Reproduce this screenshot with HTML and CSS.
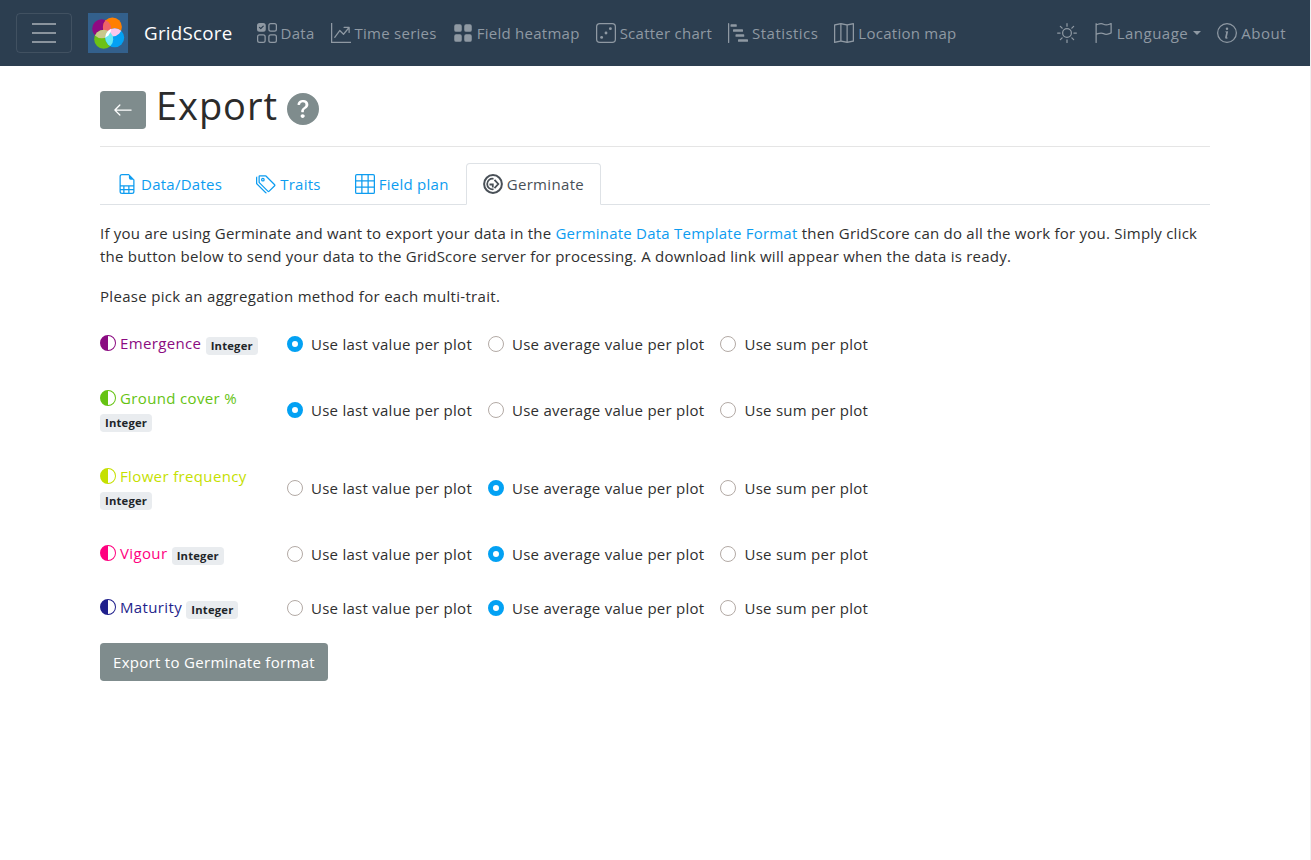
FILE: index.html
```html
<!DOCTYPE html>
<html lang="en">
<head>
<meta charset="utf-8">
<title>GridScore</title>
<link rel="stylesheet" href="styles.css">
</head>
<body>
<nav class="navbar">
  <button class="toggler" aria-label="Menu"><span></span><span></span><span></span></button>
  <div class="logo">
    <svg viewBox="0 0 40 40" width="40" height="40">
      <defs>
        <clipPath id="cp"><circle cx="13.700" cy="15.700" r="9.500"/></clipPath>
        <clipPath id="co"><circle cx="24.400" cy="14" r="9.500"/></clipPath>
        <clipPath id="cg"><circle cx="15.700" cy="26.300" r="9.500"/></clipPath>
        <clipPath id="cb"><circle cx="26.700" cy="24.700" r="9.500"/></clipPath>
      </defs>
      <rect width="40" height="40" fill="#33608c"/>
      <circle cx="13.700" cy="15.700" r="9.500" fill="#8f0a83"/>
      <circle cx="24.400" cy="14" r="9.500" fill="#ff7f00"/>
      <circle cx="15.700" cy="26.300" r="9.500" fill="#6cc114"/>
      <circle cx="26.700" cy="24.700" r="9.500" fill="#03a1f3"/>
      <circle cx="24.400" cy="14" r="9.500" fill="#f0626a" clip-path="url(#cp)"/>
      <circle cx="15.700" cy="26.300" r="9.500" fill="#c8c88c" clip-path="url(#cp)"/>
      <circle cx="26.700" cy="24.700" r="9.500" fill="#f9c8ec" clip-path="url(#co)"/>
      <circle cx="26.700" cy="24.700" r="9.500" fill="#66e8f2" clip-path="url(#cg)"/>
      <circle cx="26.700" cy="24.700" r="9.500" fill="#fff" clip-path="url(#cp)"/>
    </svg>
  </div>
  <a class="brand">GridScore</a>
  <ul class="nav-main">
    <li><svg class="ni" viewBox="0 0 16 16"><path fill-rule="evenodd" d="M2 10h3a1 1 0 0 1 1 1v3a1 1 0 0 1-1 1H2a1 1 0 0 1-1-1v-3a1 1 0 0 1 1-1zm9-9h3a1 1 0 0 1 1 1v3a1 1 0 0 1-1 1h-3a1 1 0 0 1-1-1V2a1 1 0 0 1 1-1zm0 9a1 1 0 0 0-1 1v3a1 1 0 0 0 1 1h3a1 1 0 0 0 1-1v-3a1 1 0 0 0-1-1h-3zm0-10a2 2 0 0 0-2 2v3a2 2 0 0 0 2 2h3a2 2 0 0 0 2-2V2a2 2 0 0 0-2-2h-3zM2 9a2 2 0 0 0-2 2v3a2 2 0 0 0 2 2h3a2 2 0 0 0 2-2v-3a2 2 0 0 0-2-2H2zm7 2a2 2 0 0 1 2-2h3a2 2 0 0 1 2 2v3a2 2 0 0 1-2 2h-3a2 2 0 0 1-2-2v-3zM0 2a2 2 0 0 1 2-2h3a2 2 0 0 1 2 2v3a2 2 0 0 1-2 2H2a2 2 0 0 1-2-2V2zm5.354.854a.5.5 0 1 0-.708-.708L3 3.793l-.646-.647a.5.5 0 1 0-.708.708l1 1a.5.5 0 0 0 .708 0l2-2z"/></svg>Data</li>
    <li><svg class="ni" viewBox="0 0 16 16"><path fill-rule="evenodd" d="M0 0h1v15h15v1H0V0zm10 3.500a.5.5 0 0 1 .5-.5h4a.5.5 0 0 1 .5.5v4a.5.5 0 0 1-1 0V4.900l-3.613 4.417a.5.5 0 0 1-.74.037L7.060 6.767l-3.656 5.027a.5.5 0 0 1-.808-.588l4-5.500a.5.5 0 0 1 .758-.06l2.609 2.610L13.445 4H10.500a.5.5 0 0 1-.5-.5z"/></svg>Time series</li>
    <li><svg class="ni" viewBox="0 0 16 16"><path d="M1 2.500A1.500 1.500 0 0 1 2.500 1h3A1.500 1.500 0 0 1 7 2.500v3A1.500 1.500 0 0 1 5.500 7h-3A1.500 1.500 0 0 1 1 5.500v-3zm8 0A1.500 1.500 0 0 1 10.500 1h3A1.500 1.500 0 0 1 15 2.500v3A1.500 1.500 0 0 1 13.500 7h-3A1.500 1.500 0 0 1 9 5.500v-3zm-8 8A1.500 1.500 0 0 1 2.500 9h3A1.500 1.500 0 0 1 7 10.500v3A1.500 1.500 0 0 1 5.500 15h-3A1.500 1.500 0 0 1 1 13.500v-3zm8 0A1.500 1.500 0 0 1 10.500 9h3a1.500 1.500 0 0 1 1.500 1.500v3a1.500 1.500 0 0 1-1.500 1.500h-3A1.500 1.500 0 0 1 9 13.500v-3z"/></svg>Field heatmap</li>
    <li><svg class="ni" viewBox="0 0 16 16"><path d="M13 1a2 2 0 0 1 2 2v10a2 2 0 0 1-2 2H3a2 2 0 0 1-2-2V3a2 2 0 0 1 2-2h10zM3 0a3 3 0 0 0-3 3v10a3 3 0 0 0 3 3h10a3 3 0 0 0 3-3V3a3 3 0 0 0-3-3H3z"/><circle cx="4.500" cy="11.500" r="1.150"/><circle cx="8" cy="8" r="1.150"/><circle cx="11.500" cy="4.500" r="1.150"/></svg>Scatter chart</li>
    <li class="wide"><svg class="ni" viewBox="0 0 16 16"><path d="M.5 0a.5.5 0 0 1 .5.5v15a.5.5 0 0 1-1 0V.5A.5.5 0 0 1 .5 0zM2 1.500a.5.5 0 0 1 .5-.5h4a.5.5 0 0 1 .5.5v1a.5.5 0 0 1-.5.5h-4a.5.5 0 0 1-.5-.5v-1zm2 4a.5.5 0 0 1 .5-.5h7a.5.5 0 0 1 .5.5v1a.5.5 0 0 1-.5.5h-7a.5.5 0 0 1-.5-.5v-1zm2 4a.5.5 0 0 1 .5-.5h6a.5.5 0 0 1 .5.5v1a.5.5 0 0 1-.5.5h-6a.5.5 0 0 1-.5-.5v-1zm2 4a.5.5 0 0 1 .5-.5h7a.5.5 0 0 1 .5.5v1a.5.5 0 0 1-.5.5h-7a.5.5 0 0 1-.5-.5v-1z"/></svg>Statistics</li>
    <li><svg class="ni" viewBox="0 0 16 16"><path fill-rule="evenodd" d="M15.817.113A.5.5 0 0 1 16 .5v14a.5.5 0 0 1-.402.49l-5 1a.502.502 0 0 1-.196 0L5.500 15.010l-4.902.98A.5.5 0 0 1 0 15.500v-14a.5.5 0 0 1 .402-.49l5-1a.5.5 0 0 1 .196 0L10.500.99l4.902-.98a.5.5 0 0 1 .415.103zM10 1.910l-4-.8v12.980l4 .8V1.910zm1 12.980 4-.8V1.110l-4 .8v12.980zm-6-.8V1.110l-4 .8v12.980l4-.8z"/></svg>Location map</li>
  </ul>
  <ul class="nav-right">
    <li><svg class="ni" viewBox="0 0 16 16"><path d="M8 11a3 3 0 1 1 0-6 3 3 0 0 1 0 6zm0 1a4 4 0 1 0 0-8 4 4 0 0 0 0 8zM8 0a.5.5 0 0 1 .5.5v2a.5.5 0 0 1-1 0v-2A.5.5 0 0 1 8 0zm0 13a.5.5 0 0 1 .5.5v2a.5.5 0 0 1-1 0v-2A.5.5 0 0 1 8 13zm8-5a.5.5 0 0 1-.5.5h-2a.5.5 0 0 1 0-1h2a.5.5 0 0 1 .5.5zM3 8a.5.5 0 0 1-.5.5h-2a.5.5 0 0 1 0-1h2A.5.5 0 0 1 3 8zm10.657-5.657a.5.5 0 0 1 0 .707l-1.414 1.415a.5.5 0 1 1-.707-.708l1.414-1.414a.5.5 0 0 1 .707 0zm-9.193 9.193a.5.5 0 0 1 0 .707L3.050 13.657a.5.5 0 0 1-.707-.707l1.414-1.414a.5.5 0 0 1 .707 0zm9.193 2.121a.5.5 0 0 1-.707 0l-1.414-1.414a.5.5 0 0 1 .707-.707l1.414 1.414a.5.5 0 0 1 0 .707zM4.464 4.465a.5.5 0 0 1-.707 0L2.343 3.050a.5.5 0 1 1 .707-.707l1.414 1.414a.5.5 0 0 1 0 .708z"/></svg></li>
    <li><svg class="ni" viewBox="0 0 16 16"><path fill-rule="evenodd" d="M14.778.085A.5.5 0 0 1 15 .5V8a.5.5 0 0 1-.314.464L14.500 8l.186.464-.003.001-.006.003-.023.009a12.435 12.435 0 0 1-.397.15c-.264.095-.631.223-1.047.35-.816.252-1.879.523-2.710.523-.847 0-1.548-.28-2.158-.525l-.028-.01C7.680 8.710 7.140 8.500 6.500 8.500c-.7 0-1.638.23-2.437.477A19.626 19.626 0 0 0 3 9.342V15.500a.5.5 0 0 1-1 0V.5a.5.5 0 0 1 1 0v.282c.226-.079.496-.17.79-.26C4.606.272 5.670 0 6.500 0c.84 0 1.524.277 2.121.519l.043.018C9.286.788 9.828 1 10.500 1c.7 0 1.638-.23 2.437-.477a19.587 19.587 0 0 0 1.349-.476l.019-.007.004-.002h.001M14 1.221c-.22.078-.480.167-.766.255-.81.252-1.872.523-2.734.523-.886 0-1.592-.286-2.203-.534l-.008-.002C7.662 1.210 7.139 1 6.500 1c-.669 0-1.606.229-2.415.478A21.294 21.294 0 0 0 3 1.845v6.433c.22-.078.480-.167.766-.255C4.576 7.770 5.638 7.500 6.500 7.500c.847 0 1.548.28 2.158.525l.028.01C9.320 8.290 9.860 8.500 10.500 8.500c.668 0 1.606-.229 2.415-.478A21.317 21.317 0 0 0 14 7.655V1.222z"/></svg>Language<span class="caret"></span></li>
    <li><svg class="ni" viewBox="0 0 16 16"><path d="M8 15A7 7 0 1 1 8 1a7 7 0 0 1 0 14zm0 1A8 8 0 1 0 8 0a8 8 0 0 0 0 16z"/><path d="m8.930 6.588-2.290.287-.082.38.45.083c.294.07.352.176.288.469l-.738 3.468c-.194.897.105 1.319.808 1.319.545 0 1.178-.252 1.465-.598l.088-.42c-.2.176-.492.246-.686.246-.275 0-.375-.193-.304-.533L8.930 6.588zM9 4.500a1 1 0 1 1-2 0 1 1 0 0 1 2 0z"/></svg>About</li>
  </ul>
</nav>

<main class="container">
  <header class="page-head">
    <button class="btn back" aria-label="Back"><svg viewBox="0 0 16 16" width="20" height="20"><path fill-rule="evenodd" d="M15 8a.5.5 0 0 0-.5-.5H2.707l3.147-3.146a.5.5 0 1 0-.708-.708l-4 4a.5.5 0 0 0 0 .708l4 4a.5.5 0 0 0 .708-.708L2.707 8.500H14.500A.5.5 0 0 0 15 8z"/></svg></button>
    <h1>Export</h1>
    <svg class="help" viewBox="0 0 16 16"><path d="M16 8A8 8 0 1 1 0 8a8 8 0 0 1 16 0zM5.496 6.033h.825c.138 0 .248-.113.266-.25.09-.656.54-1.134 1.342-1.134.686 0 1.314.343 1.314 1.168 0 .635-.374.927-.965 1.371-.673.489-1.206 1.060-1.168 1.987l.003.217a.25.25 0 0 0 .25.246h.811a.25.25 0 0 0 .25-.25v-.105c0-.718.273-.927 1.010-1.486.609-.463 1.244-.977 1.244-2.056 0-1.511-1.276-2.241-2.673-2.241-1.267 0-2.655.59-2.750 2.286a.237.237 0 0 0 .241.247zm2.325 6.443c.61 0 1.029-.394 1.029-.927 0-.552-.42-.94-1.029-.94-.584 0-1.009.388-1.009.94 0 .533.425.927 1.010.927z"/></svg>
  </header>
  <ul class="tabs">
    <li class="tab"><svg class="ti" viewBox="0 0 16 16"><path fill-rule="evenodd" d="M14 14V4.500L9.500 0H4a2 2 0 0 0-2 2v12a2 2 0 0 0 2 2h8a2 2 0 0 0 2-2zM9.500 3A1.500 1.500 0 0 0 11 4.500h2V9H3V2a1 1 0 0 1 1-1h5.500v2zM3 12v-2h2v2H3zm0 1h2v2H4a1 1 0 0 1-1-1v-1zm3 2v-2h3v2H6zm4 0v-2h3v1a1 1 0 0 1-1 1h-2zm3-3h-3v-2h3v2zm-7 0v-2h3v2H6z"/></svg>Data/Dates</li>
    <li class="tab"><svg class="ti" viewBox="0 0 16 16"><path d="M3 2v4.586l7 7L14.586 9l-7-7H3zM2 2a1 1 0 0 1 1-1h4.586a1 1 0 0 1 .707.293l7 7a1 1 0 0 1 0 1.414l-4.586 4.586a1 1 0 0 1-1.414 0l-7-7A1 1 0 0 1 2 6.586V2z"/><path d="M5.500 5a.5.5 0 1 1 0-1 .5.5 0 0 1 0 1zm0 1a1.500 1.500 0 1 0 0-3 1.500 1.500 0 0 0 0 3zM1 7.086a1 1 0 0 0 .293.707L8.750 15.250l-.043.043a1 1 0 0 1-1.414 0l-7-7A1 1 0 0 1 0 7.586V3a1 1 0 0 1 1-1v5.086z"/></svg>Traits</li>
    <li class="tab"><svg class="ti" viewBox="0 0 16 16"><path fill-rule="evenodd" d="M0 1.500A1.500 1.500 0 0 1 1.500 0h13A1.500 1.500 0 0 1 16 1.500v13a1.500 1.500 0 0 1-1.500 1.500h-13A1.500 1.500 0 0 1 0 14.500v-13zM1.500 1a.5.5 0 0 0-.5.5V5h4V1H1.500zM5 6H1v4h4V6zm1 4h4V6H6v4zm-1 1H1v3.500a.5.5 0 0 0 .5.5H5v-4zm1 0v4h4v-4H6zm5 0v4h3.500a.5.5 0 0 0 .5-.5V11h-4zm0-1h4V6h-4v4zm0-5h4V1.500a.5.5 0 0 0-.5-.5H11v4zm-1 0V1H6v4h4z"/></svg>Field plan</li>
    <li class="tab active"><svg class="ti ti-line" viewBox="0 0 20 20"><circle cx="10" cy="10" r="8.900" stroke-width="2"/><path d="M10.500 4.800A5.300 5.300 0 1 0 10.500 15.200M6.500 10.500h3.300v3" stroke-width="1.800"/><path d="M11.500 5.800l3.800 4.200-3.800 4.200" stroke-width="1.800"/></svg>Germinate</li>
  </ul>
  <p class="intro">If you are using Germinate and want to export your data in the <a>Germinate Data Template Format</a> then GridScore can do all the work for you. Simply click the button below to send your data to the GridScore server for processing. A download link will appear when the data is ready.</p>
  <p class="pick">Please pick an aggregation method for each multi-trait.</p>

  <div class="traits">
    <div class="row r1">
      <div class="trait c-emergence"><svg class="half" viewBox="0 0 16 16"><path d="M8 15A7 7 0 1 0 8 1v14zm0 1A8 8 0 1 1 8 0a8 8 0 0 1 0 16z"/></svg>Emergence <span class="badge">Integer</span></div>
      <div class="radios"><label class="radio on">Use last value per plot</label><label class="radio">Use average value per plot</label><label class="radio">Use sum per plot</label></div>
    </div>
    <div class="row r2">
      <div class="trait c-ground"><svg class="half" viewBox="0 0 16 16"><path d="M8 15A7 7 0 1 0 8 1v14zm0 1A8 8 0 1 1 8 0a8 8 0 0 1 0 16z"/></svg>Ground cover % <span class="badge">Integer</span></div>
      <div class="radios"><label class="radio on">Use last value per plot</label><label class="radio">Use average value per plot</label><label class="radio">Use sum per plot</label></div>
    </div>
    <div class="row r2">
      <div class="trait c-flower"><svg class="half" viewBox="0 0 16 16"><path d="M8 15A7 7 0 1 0 8 1v14zm0 1A8 8 0 1 1 8 0a8 8 0 0 1 0 16z"/></svg>Flower frequency <span class="badge">Integer</span></div>
      <div class="radios"><label class="radio">Use last value per plot</label><label class="radio on">Use average value per plot</label><label class="radio">Use sum per plot</label></div>
    </div>
    <div class="row r1">
      <div class="trait c-vigour"><svg class="half" viewBox="0 0 16 16"><path d="M8 15A7 7 0 1 0 8 1v14zm0 1A8 8 0 1 1 8 0a8 8 0 0 1 0 16z"/></svg>Vigour <span class="badge">Integer</span></div>
      <div class="radios"><label class="radio">Use last value per plot</label><label class="radio on">Use average value per plot</label><label class="radio">Use sum per plot</label></div>
    </div>
    <div class="row r1">
      <div class="trait c-maturity"><svg class="half" viewBox="0 0 16 16"><path d="M8 15A7 7 0 1 0 8 1v14zm0 1A8 8 0 1 1 8 0a8 8 0 0 1 0 16z"/></svg>Maturity <span class="badge">Integer</span></div>
      <div class="radios"><label class="radio">Use last value per plot</label><label class="radio on">Use average value per plot</label><label class="radio">Use sum per plot</label></div>
    </div>
  </div>
  <button class="btn export">Export to Germinate format</button>
</main>
</body>
</html>
```

FILE: styles.css
```css
*, *::before, *::after { box-sizing: border-box; }
html, body { height: 100%; }
body {
  margin: 0;
  background: #fff;
  border-right: 1px solid #f1f1f1;
  color: #333;
  font-family: "Open Sans", "Noto Sans", sans-serif;
  font-size: 15px;
  line-height: 22.500px;
  letter-spacing: .26px;
  overflow: hidden;
}
ul { list-style: none; margin: 0; padding: 0; }
svg { fill: currentColor; display: block; flex: none; }

.navbar {
  height: 66px;
  background: #2c3e50;
  display: flex;
  align-items: center;
  padding: 0 24px 0 16px;
}
.toggler {
  width: 56px;
  height: 40px;
  margin-right: 16px;
  padding: 0;
  background: transparent;
  border: 1px solid rgba(255,255,255,.1);
  border-radius: 4px;
  display: flex;
  flex-direction: column;
  justify-content: center;
  align-items: center;
  gap: 7px;
}
.toggler span { width: 24px; height: 2px; background: #8a949e; }
.logo { width: 40px; height: 40px; margin-right: 16px; }
.brand { color: #fff; font-size: 18.750px; margin-right: 24px; }
.nav-main, .nav-right { display: flex; align-items: center; color: #8f99a3; }
.nav-main { gap: 16px; }
.nav-right { margin-left: auto; gap: 16px; letter-spacing: .5px; }
.nav-main li, .nav-right li { display: flex; align-items: center; gap: 4px; }
.nav-main li.wide { letter-spacing: .46px; }
.ni { width: 20px; height: 20px; }
.caret {
  margin-left: 1px;
  width: 0; height: 0;
  border-top: 4.500px solid currentColor;
  border-left: 4.500px solid transparent;
  border-right: 4.500px solid transparent;
}

.container { width: 1110px; margin: 0 0 0 100px; }
.page-head {
  display: flex;
  align-items: center;
  height: 81px;
  border-bottom: 1px solid #e5e5e5;
  padding-bottom: 1px;
}
.btn {
  background: #7f8c8d;
  color: #fff;
  border: 0;
  border-radius: 3.750px;
  font: inherit;
  letter-spacing: inherit;
}
.back {
  width: 46px;
  height: 38px;
  margin: 8px 10px 0 0;
  display: flex;
  align-items: center;
  justify-content: center;
  padding: 0;
}
h1 { margin: 0 9px 0 0; font-size: 38px; font-weight: 400; line-height: 45px; color: #2b2b2b; letter-spacing: .95px; }
.help { width: 32px; height: 32px; margin-top: 6px; color: #7f8c8d; }

.tabs {
  display: flex;
  margin-top: 16px;
  height: 42px;
  border-bottom: 1px solid #dee2e6;
  color: #0d9cf0;
  letter-spacing: .26px;
}
.tab {
  display: flex;
  align-items: center;
  gap: 4px;
  padding: 0 16px;
  height: 42px;
  border: 1px solid transparent;
  border-radius: 4px 4px 0 0;
}
.tab.active {
  color: #495057;
  background: #fff;
  border-color: #dee2e6 #dee2e6 #fff;
  letter-spacing: .34px;
}
.ti { width: 20px; height: 20px; }
.ti-line { fill: none; stroke: currentColor; }

.intro { margin: 17px 0 0; color: #2f2f2f; letter-spacing: .23px; }
.intro a { color: #0d9cf0; }
.pick { margin: 18px 0 0; color: #2f2f2f; letter-spacing: .31px; }

.traits { margin-top: 17.500px; }
.row { display: flex; align-items: center; }
.row.r1 { min-height: 38px; margin-bottom: 16px; }
.row.r2 { min-height: 62px; margin-bottom: 16px; }
.trait { width: 187px; padding-right: 15px; margin-top: -1px; letter-spacing: .36px; }
.half { display: inline-block; width: 16px; height: 16px; vertical-align: -2px; margin-right: 4px; }
.badge {
  display: inline-block;
  background: #e9ecef;
  color: #212529;
  font-size: 11.250px;
  font-weight: 700;
  line-height: 12px;
  letter-spacing: .2px;
  padding: 3px 5px;
  border-radius: 3.750px;
  vertical-align: -1px;
}
.c-emergence { color: #8b0b81; }
.c-ground { color: #65c312; }
.c-flower { color: #c5e000; }
.c-vigour { color: #ff007f; }
.c-maturity { color: #1f1f8c; }

.radios { display: flex; align-items: center; color: #2f2f2f; }
.radio { display: flex; align-items: center; margin-right: 16px; }
.radio::before {
  content: "";
  flex: none;
  width: 16px;
  height: 16px;
  margin-right: 8px;
  border-radius: 50%;
  border: 1px solid #b3aaa5;
  background: #fff;
}
.radio.on::before { border: 5px solid #03a1f3; }

.export { height: 38px; padding: 0 13px; display: block; letter-spacing: .3px; }
```
